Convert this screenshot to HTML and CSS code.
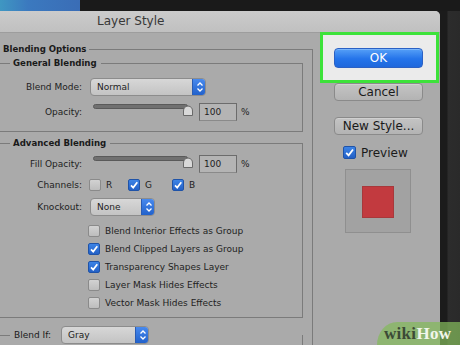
FILE: index.html
```html
<!DOCTYPE html>
<html>
<head>
<meta charset="utf-8">
<link rel="stylesheet" href="styles.css">
</head>
<body>
<div class="screen">
  <div class="desk"><div class="desk-blue"></div></div>
  <div class="stage">
    <div class="dialog">
      <div class="titlebar">Layer Style</div>
      <div class="dbody">
        <div class="left">
          <div class="box outer">
            <div class="legend l-outer">Blending Options</div>
            <div class="box inner gen">
              <div class="legend l-inner">General Blending</div>
              <div class="row r-mode">
                <span class="lbl">Blend Mode:</span>
                <div class="select s-mode"><span class="sv">Normal</span><span class="step"><svg width="14" height="18" viewBox="0 0 14 18"><path d="M4.5 7.5 L7 5 L9.5 7.5 M4.5 10.5 L7 13 L9.5 10.5" fill="none" stroke="#fff" stroke-width="1.3"/></svg></span></div>
              </div>
              <div class="row r-op">
                <span class="lbl">Opacity:</span>
                <svg class="slider" width="101" height="18" viewBox="0 0 101 18"><rect x="0.5" y="1.5" width="94" height="4" rx="2" fill="#707070" stroke="#5a5a5a" stroke-width="1"/><path d="M90.5 12.5 L90.5 8 Q90.5 3.5 95 3 Q99.5 3.5 99.5 8 L99.5 12.5 Z" fill="#d9d9d9" stroke="#6a6a6a" stroke-width="1"/></svg>
                <div class="num">100</div><span class="pct">%</span>
              </div>
            </div>
            <div class="box inner adv">
              <div class="legend l-inner">Advanced Blending</div>
              <div class="row r-fill">
                <span class="lbl">Fill Opacity:</span>
                <svg class="slider" width="101" height="18" viewBox="0 0 101 18"><rect x="0.5" y="1.5" width="94" height="4" rx="2" fill="#707070" stroke="#5a5a5a" stroke-width="1"/><path d="M90.5 12.5 L90.5 8 Q90.5 3.5 95 3 Q99.5 3.5 99.5 8 L99.5 12.5 Z" fill="#d9d9d9" stroke="#6a6a6a" stroke-width="1"/></svg>
                <div class="num">100</div><span class="pct">%</span>
              </div>
              <div class="row r-ch">
                <span class="lbl">Channels:</span>
                <div class="chans">
                  <span class="chk"><i class="cb"></i>R</span>
                  <span class="chk"><i class="cb on"><svg width="12" height="12" viewBox="0 0 12 12"><path d="M3 6.3 L5.2 8.6 L9.3 3.2" fill="none" stroke="#fff" stroke-width="1.7"/></svg></i>G</span>
                  <span class="chk"><i class="cb on"><svg width="12" height="12" viewBox="0 0 12 12"><path d="M3 6.3 L5.2 8.6 L9.3 3.2" fill="none" stroke="#fff" stroke-width="1.7"/></svg></i>B</span>
                </div>
              </div>
              <div class="row r-ko">
                <span class="lbl">Knockout:</span>
                <div class="select s-ko"><span class="sv">None</span><span class="step"><svg width="14" height="18" viewBox="0 0 14 18"><path d="M4.5 7.5 L7 5 L9.5 7.5 M4.5 10.5 L7 13 L9.5 10.5" fill="none" stroke="#fff" stroke-width="1.3"/></svg></span></div>
              </div>
              <div class="opts">
                <div class="opt"><i class="cb"></i>Blend Interior Effects as Group</div>
                <div class="opt"><i class="cb on"><svg width="12" height="12" viewBox="0 0 12 12"><path d="M3 6.3 L5.2 8.6 L9.3 3.2" fill="none" stroke="#fff" stroke-width="1.7"/></svg></i>Blend Clipped Layers as Group</div>
                <div class="opt"><i class="cb on"><svg width="12" height="12" viewBox="0 0 12 12"><path d="M3 6.3 L5.2 8.6 L9.3 3.2" fill="none" stroke="#fff" stroke-width="1.7"/></svg></i>Transparency Shapes Layer</div>
                <div class="opt"><i class="cb"></i>Layer Mask Hides Effects</div>
                <div class="opt"><i class="cb"></i>Vector Mask Hides Effects</div>
              </div>
            </div>
            <div class="box inner bif">
              <div class="legend l-if">
                <span>Blend If:</span>
                <div class="select s-gray"><span class="sv">Gray</span><span class="step"><svg width="14" height="18" viewBox="0 0 14 18"><path d="M4.5 7.5 L7 5 L9.5 7.5 M4.5 10.5 L7 13 L9.5 10.5" fill="none" stroke="#fff" stroke-width="1.3"/></svg></span></div>
              </div>
            </div>
          </div>
        </div>
        <div class="right">
          <div class="hl"><div class="btn ok">OK</div></div>
          <div class="btn">Cancel</div>
          <div class="btn newst">New Style...</div>
          <div class="pv"><i class="cb on big"><svg width="13" height="13" viewBox="0 0 13 13"><path d="M3.2 6.8 L5.6 9.3 L10 3.5" fill="none" stroke="#fff" stroke-width="1.8"/></svg></i>Preview</div>
          <div class="swatch"><div class="red"></div></div>
        </div>
      </div>
    </div>
    <div class="edge"></div>
  </div>
  <div class="wm"><span class="wk">wiki</span><span class="hw">How</span></div>
</div>
</body>
</html>
```

FILE: styles.css
```css
* { box-sizing: border-box; margin: 0; padding: 0; }
html, body { width: 460px; height: 345px; overflow: hidden; background: #1c1c1c; }
body { font-family: "DejaVu Sans", sans-serif; font-size: 9px; color: #1e1e1e; }

.screen { position: relative; width: 460px; height: 345px; overflow: hidden; }
.desk { height: 11px; background: #1a1a1a; }
.desk-blue { width: 80px; height: 11px; background: linear-gradient(90deg, #3f97c2, #3b79bf 35%, #3a6db6); }

.stage { display: flex; height: 334px; }
.dialog { width: 440px; background: #aaaaaa; border-top-right-radius: 5px; overflow: hidden; display: flex; flex-direction: column; }
.edge { flex: 1; background: linear-gradient(90deg, #1b1b1b 0, #1b1b1b 7px, #2c2c2c 8px, #2a2a2a); }

.titlebar { height: 22px; line-height: 21px; padding-left: 97px; font-size: 12px; color: #383838; background: linear-gradient(#cbcbcb, #c0c0c0); border-bottom: 1px solid #9d9d9d; }

.dbody { display: flex; flex: 1; }
.left { width: 313px; display: flex; flex-direction: column; }

.box { border-color: #7b7b7b; border-style: solid; border-width: 0; }
.outer { flex: 1; margin-top: 16px; border-top-width: 1px; border-right-width: 1px; }
.inner { margin-right: 9px; border-top-width: 1px; border-right-width: 1px; border-bottom-width: 1px; }

.legend { display: table; margin-top: -7px; line-height: 12px; background: #aaaaaa; font-weight: bold; font-size: 8.6px; color: #1a1a1a; }
.l-outer { padding: 0 3px 0 3px; }
.l-inner { margin-left: 10px; padding: 0 4px 0 3px; }

.gen { margin-top: 8px; padding-bottom: 10px; }
.adv { margin-top: 11px; padding-bottom: 5px; }
.bif { margin-top: 17px; height: 30px; }

.row { display: flex; align-items: center; height: 18px; }
.lbl { width: 82px; text-align: right; flex: none; }
.r-mode { margin-top: 9px; }
.r-op { margin-top: 7px; }
.r-fill { margin-top: 6px; }
.r-ch { margin-top: 3px; }
.r-ko { margin-top: 4px; }

.select { display: flex; height: 18px; margin-left: 8px; border: 1px solid #8c8c8c; border-radius: 4px; background: linear-gradient(#d7d7d7, #c3c3c3); overflow: hidden; }
.sv { flex: 1; padding-left: 6px; line-height: 16px; }
.step { width: 14px; margin: -1px -1px -1px 0; background: linear-gradient(#4a8cf0, #1f5fc9); border-left: 1px solid #2a5cb3; }
.step svg { display: block; }
.s-mode { width: 116px; }
.s-ko { width: 65px; }
.s-gray { width: 88px; margin-left: 0; }

.slider { display: block; margin-left: 11px; flex: none; }
.num { width: 38px; height: 18px; margin-left: 5px; border: 1px solid #6c6c6c; border-bottom-color: #8a8a8a; background: #b4b4b4; padding-left: 4px; line-height: 16px; }
.pct { margin-left: 4px; }

.chans { display: grid; grid-template-columns: 39px 44px auto; margin-left: 7px; }
.chk { display: flex; align-items: center; }

.cb { display: block; flex: none; width: 12px; height: 12px; border: 1px solid #8a8a8a; border-radius: 2px; background: linear-gradient(#d2d2d2, #bdbdbd); margin-right: 5px; }
.cb.on { border-color: #1f53a8; background: linear-gradient(#3d84e6, #2360c6); }
.cb svg { display: block; margin: -1px; }

.opts { margin-top: 6px; margin-left: 88px; }
.opt { display: flex; align-items: center; height: 18px; }

.l-if { display: flex; align-items: center; margin-top: -10px; margin-left: 10px; padding: 0 7px 0 4px; line-height: 18px; height: 18px; font-weight: normal; font-size: 9px; gap: 10px; }

.right { width: 127px; display: flex; flex-direction: column; align-items: flex-start; }
.hl { margin: -1px 0 0 7px; width: 119px; height: 51px; border: 3px solid #3de23a; background: #ebebeb; padding: 13px 0 0 11px; }
.btn { width: 89px; height: 18px; margin-left: 21px; border: 1px solid #8a8a8a; border-radius: 4px; background: linear-gradient(#c4c4c4, #b3b3b3); box-shadow: inset 0 1px 0 #d0d0d0; font-size: 12px; line-height: 16px; text-align: center; color: #1a1a1a; }
.hl .btn.ok { margin-left: 0; height: 20px; line-height: 18px; border-color: #2b61c4; background: linear-gradient(#56a0f7, #2474ea 55%, #1f68dc); box-shadow: inset 0 1px 0 #7bb6fb; color: #fff; }
.newst { margin-top: 16px; }
.pv { display: flex; align-items: center; margin: 11px 0 0 30px; height: 13px; font-size: 12px; color: #1a1a1a; }
.cb.big { width: 13px; height: 13px; }
.swatch { margin: 10px 0 0 32px; width: 66px; height: 64px; border: 1px solid #8f8f8f; background: #a2a2a2; display: flex; align-items: center; justify-content: center; padding-top: 1px; }
.red { width: 32px; height: 32px; background: #c23a3f; border: 1px solid #a8383b; }

.wm { position: absolute; right: 0; bottom: 0; width: 83px; height: 23px; border-top-left-radius: 20px 23px; background: rgba(132, 186, 92, 0.72); padding-left: 7px; font-family: "Liberation Serif", serif; font-weight: bold; font-size: 17px; line-height: 24px; letter-spacing: 0.3px; }
.wk { color: #3c4a36; }
.hw { color: #f1f5ea; }
```
